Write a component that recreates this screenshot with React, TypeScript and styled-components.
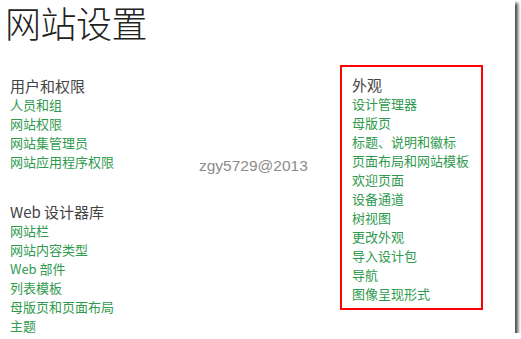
import React from 'react';
import styled, {createGlobalStyle} from "styled-components";

const GlobalStyle = createGlobalStyle`
  html, body {
    margin: 0;
    padding: 0;
    background: #ffffff;
  }
  body {
    font-family: "Noto Sans CJK SC", "Noto Sans", sans-serif;
  }
`

const userLinks = ["人员和组", "网站权限", "网站集管理员", "网站应用程序权限"];
const designerLinks = ["网站栏", "网站内容类型", "Web 部件", "列表模板", "母版页和页面布局", "主题"];
const lookLinks = ["设计管理器", "母版页", "标题、说明和徽标", "页面布局和网站模板", "欢迎页面", "设备通道", "树视图", "更改外观", "导入设计包", "导航", "图像呈现形式"];

export default function App() {
    return (
        <>
            <GlobalStyle/>
            <Frame>
                <Title>网站设置</Title>
                <Columns>
                    <LeftColumn>
                        <Group>
                            <GroupTitle>用户和权限</GroupTitle>
                            {userLinks.map(l => <LinkItem key={l}>{l}</LinkItem>)}
                        </Group>
                        <Group>
                            <GroupTitle>Web 设计器库</GroupTitle>
                            {designerLinks.map(l => <LinkItem key={l}>{l}</LinkItem>)}
                        </Group>
                    </LeftColumn>
                    <HighlightBox>
                        <GroupTitle>外观</GroupTitle>
                        {lookLinks.map(l => <LinkItem key={l}>{l}</LinkItem>)}
                    </HighlightBox>
                </Columns>
                <Watermark>zgy5729@2013</Watermark>
            </Frame>
        </>
    );
}

const Frame = styled.div`
  position: relative;
  width: 515px;
  height: 333px;
  background: #ffffff;
  box-shadow: 3px 3px 3px rgba(0, 0, 0, 0.7);
`
const Title = styled.h1`
  margin: 0;
  padding: 0 0 0 5px;
  font-size: 36px;
  font-weight: 300;
  line-height: 44px;
  color: #222;
  letter-spacing: -0.5px;
`
const Columns = styled.div`
  display: flex;
  padding: 32px 0 0 10px;
`
const LeftColumn = styled.div`
  width: 330px;
  display: flex;
  flex-direction: column;
  gap: 31px;
`
const Group = styled.div`
  display: flex;
  flex-direction: column;
`
const GroupTitle = styled.div`
  font-size: 15px;
  line-height: 19px;
  color: #444;
`
const LinkItem = styled.a`
  font-size: 13px;
  line-height: 19px;
  color: #2f9a4e;
  text-decoration: none;
  cursor: pointer;
`
const HighlightBox = styled.div`
  margin-top: -11px;
  width: 129px;
  height: 233px;
  border: 2px solid #ff0000;
  padding: 8px 0 0 10px;
  display: flex;
  flex-direction: column;
`
const Watermark = styled.span`
  position: absolute;
  left: 199px;
  top: 157px;
  font-family: "Liberation Sans", Arial, sans-serif;
  font-size: 15.5px;
  color: #8c8c8c;
`
